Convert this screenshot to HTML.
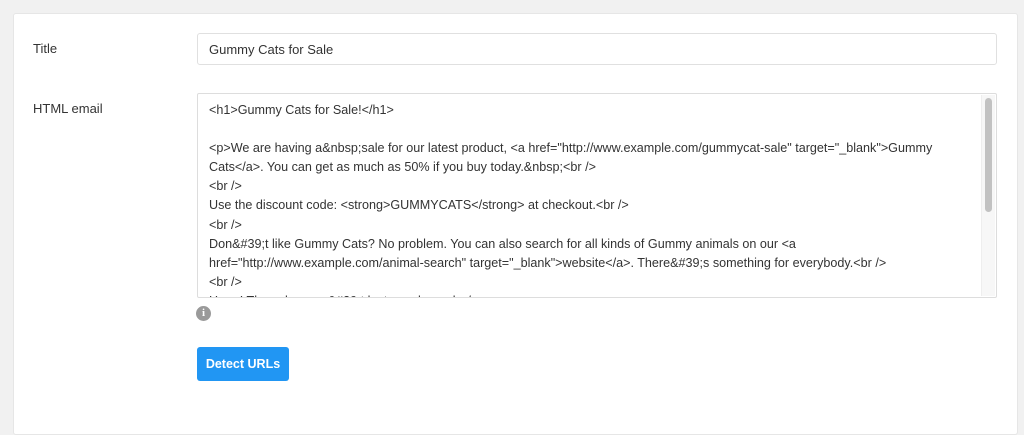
<!DOCTYPE html>
<html><head><style>
body{margin:0;background:#f1f1f1;width:1024px;height:412px;overflow:hidden;font-family:"Liberation Sans",sans-serif;color:#333;}
.card{position:absolute;left:13px;top:13px;width:1003px;height:420px;background:#fff;border:1px solid #e6e6e6;border-radius:3px;}
.lbl{position:absolute;left:33px;font-size:13px;color:#333;}
.input{position:absolute;left:197px;top:33px;height:32px;border:1px solid #e0e0e0;border-radius:3px;font-size:13px;line-height:32px;padding-left:11px;box-sizing:border-box;width:800px;}
.ta{position:absolute;left:197px;top:93px;width:800px;height:205px;border:1px solid #ddd;border-radius:2px;box-sizing:border-box;overflow:hidden;}
.tx{position:absolute;left:11px;top:7px;font-size:12.6px;line-height:19.1px;white-space:pre;color:#333;}
.sb{position:absolute;right:1px;top:1px;width:13px;height:201px;background:#f7f7f7;border-left:1px solid #eee;}
.th{position:absolute;left:3px;top:3px;width:7px;height:114px;background:#c2c2c2;border-radius:4px;}
.info{position:absolute;left:196px;top:306px;width:15px;height:15px;border-radius:50%;background:#9a9a9a;color:#fff;font-size:11px;font-weight:bold;text-align:center;line-height:15px;font-family:"Liberation Serif",serif;}
.btn{position:absolute;left:197px;top:347px;width:92px;height:34px;background:#2196f3;border-radius:3px;color:#fff;font-size:12.5px;font-weight:bold;text-align:center;line-height:34px;}
</style></head><body>
<div class="card"></div>
<div class="lbl" style="top:41px">Title</div>
<div class="input">Gummy Cats for Sale</div>
<div class="lbl" style="top:101px">HTML email</div>
<div class="ta"><div class="tx">&lt;h1&gt;Gummy Cats for Sale!&lt;/h1&gt;

&lt;p&gt;We are having a&amp;nbsp;sale for our latest product, &lt;a href="http://www.example.com/gummycat-sale" target="_blank"&gt;Gummy
Cats&lt;/a&gt;. You can get as much as 50% if you buy today.&amp;nbsp;&lt;br /&gt;
&lt;br /&gt;
Use the discount code: &lt;strong&gt;GUMMYCATS&lt;/strong&gt; at checkout.&lt;br /&gt;
&lt;br /&gt;
Don&amp;#39;t like Gummy Cats? No problem. You can also search for all kinds of Gummy animals on our &lt;a
href="http://www.example.com/animal-search" target="_blank"&gt;website&lt;/a&gt;. There&amp;#39;s something for everybody.&lt;br /&gt;
&lt;br /&gt;
Hurry! The sales won&amp;#39;t last very long.&lt;br /&gt;</div>
<div class="sb"><div class="th"></div></div></div>
<div class="info">i</div>
<div class="btn">Detect URLs</div>
</body></html>
